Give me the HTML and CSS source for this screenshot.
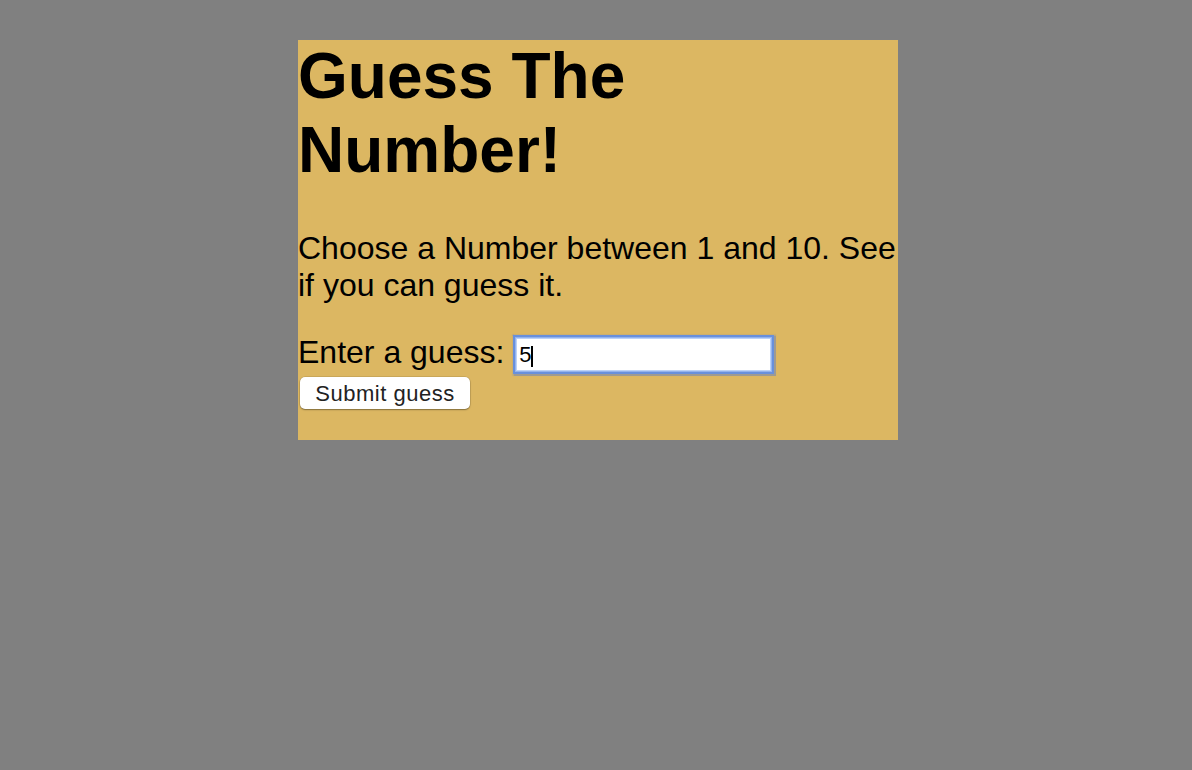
FILE: index.html
```html
<!DOCTYPE html>
<html lang="en">
<head>
<meta charset="utf-8">
<title>Guess The Number!</title>
<link rel="stylesheet" href="styles.css">
</head>
<body>
<div class="card">
  <h1 class="title">Guess The Number!</h1>
  <p class="intro">Choose a Number between 1 and 10. See if you can guess it.</p>
  <div class="guess-row">
    <label class="guess-label" for="guess">Enter a guess:</label>
    <span class="field-wrap">
      <input class="guess-input" id="guess" type="text" value="5">
      <span class="caret"></span>
    </span>
  </div>
  <button class="submit" type="button">Submit guess</button>
</div>
</body>
</html>
```

FILE: styles.css
```css
html, body {
  background: #808080;
}
body {
  margin: 0;
  padding: 40px 0 0 4px;
  font-family: "Liberation Sans", Arial, Helvetica, sans-serif;
}
.card {
  width: 600px;
  height: 400px;
  margin: 0 auto;
  background: #dcb762;
  color: #000;
}
.title {
  margin: 0;
  font-size: 64px;
  font-weight: bold;
  line-height: 73.5px;
}
.intro {
  margin: 43px 0 30px 0;
  font-size: 32px;
  line-height: 36.8px;
}
.guess-row {
  display: flex;
  align-items: flex-start;
  gap: 12px;
}
.guess-label {
  font-size: 32px;
  line-height: 37px;
}
.field-wrap {
  position: relative;
  display: block;
  margin-top: 4px;
}
.guess-input {
  display: block;
  box-sizing: border-box;
  width: 255px;
  height: 33px;
  margin: 0;
  padding: 1px 2px 0 2px;
  border: 1px solid #bcd2f7;
  background: #fff;
  font-family: "Liberation Sans", Arial, Helvetica, sans-serif;
  font-size: 22px;
  color: #000;
  outline: none;
  box-shadow: 0 0 0 1px #93b3ee, 0 0 0 3px #6890dc, 0 0 1px 4.5px rgba(115, 135, 180, 0.6);
}
.caret {
  position: absolute;
  left: 15px;
  top: 8px;
  width: 2px;
  height: 21px;
  background: #000;
}
.submit {
  display: block;
  box-sizing: border-box;
  width: 170px;
  height: 32px;
  margin: 6px 0 0 2px;
  padding: 2px 0 0 0;
  border: none;
  border-radius: 5px;
  background: #fff;
  color: #222;
  font-family: "Liberation Sans", Arial, Helvetica, sans-serif;
  font-size: 22px;
  letter-spacing: 0.5px;
  box-shadow: 0 0 0 0.5px rgba(0, 0, 0, 0.15), 0 1px 1.5px rgba(0, 0, 0, 0.35);
}
```
